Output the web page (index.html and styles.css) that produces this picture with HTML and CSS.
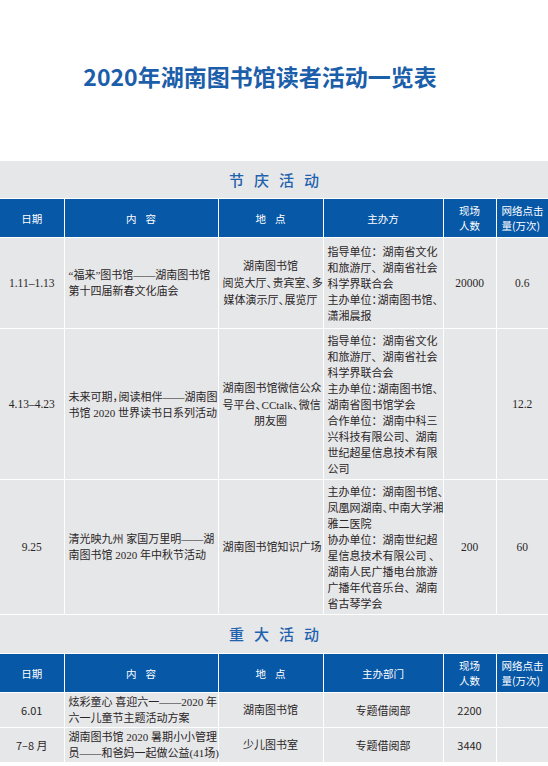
FILE: index.html
```html
<!DOCTYPE html>
<html lang="zh-CN">
<head>
<meta charset="utf-8">
<title>2020年湖南图书馆读者活动一览表</title>
<link rel="stylesheet" href="styles.css">
</head>
<body>
<div class="page">
  <header class="masthead">
    <h1 class="title">2020年湖南图书馆读者活动一览表</h1>
  </header>

  <table class="grid">
    <colgroup>
      <col class="c-date"><col class="c-content"><col class="c-place"><col class="c-org"><col class="c-num"><col class="c-net">
    </colgroup>
    <tr class="sec"><td colspan="6">节庆活动</td></tr>
    <tr class="head">
      <th>日期</th><th><span class="sp">内容</span></th><th><span class="sp">地点</span></th><th>主办方</th><th>现场<br>人数</th><th class="net">网络点击<br>量(万次)</th>
    </tr>
    <tr class="r1">
      <td class="num">1.11–1.13</td>
      <td class="content">“福来”图书馆——湖南图书馆<br>第十四届新春文化庙会</td>
      <td class="place">湖南图书馆<br>阅览大厅<span class="h">、</span>贵宾室<span class="h">、</span>多<br>媒体演示厅<span class="h">、</span>展览厅</td>
      <td class="org">指导单位：湖南省文化<br>和旅游厅、湖南省社会<br>科学界联合会<br>主办单位<span class="h">：</span>湖南图书馆<span class="h">、</span><br>潇湘晨报</td>
      <td class="num">20000</td>
      <td class="num">0.6</td>
    </tr>
    <tr>
      <td class="num">4.13–4.23</td>
      <td class="content">未来可期<span class="h">，</span>阅读相伴——湖南图<br>书馆 2020 世界读书日系列活动</td>
      <td class="place">湖南图书馆微信公众<br>号平台<span class="h">、</span>CCtalk<span class="h">、</span>微信<br>朋友圈</td>
      <td class="org">指导单位：湖南省文化<br>和旅游厅、湖南省社会<br>科学界联合会<br>主办单位<span class="h">：</span>湖南图书馆<span class="h">、</span><br>湖南省图书馆学会<br>合作单位：湖南中科三<br>兴科技有限公司、湖南<br>世纪超星信息技术有限<br>公司</td>
      <td class="num"></td>
      <td class="num">12.2</td>
    </tr>
    <tr>
      <td class="num">9.25</td>
      <td class="content">清光映九州 家国万里明——湖<br>南图书馆 2020 年中秋节活动</td>
      <td class="place">湖南图书馆知识广场</td>
      <td class="org">主办单位：湖南图书馆、<br>凤凰网湖南<span class="h">、</span>中南大学湘<br>雅二医院<br>协办单位：湖南世纪超<br>星信息技术有限公司 、<br>湖南人民广播电台旅游<br>广播年代音乐台、湖南<br>省古琴学会</td>
      <td class="num">200</td>
      <td class="num">60</td>
    </tr>
  </table>

  <table class="grid second">
    <colgroup>
      <col class="c-date"><col class="c-content"><col class="c-place"><col class="c-org"><col class="c-num"><col class="c-net">
    </colgroup>
    <tr class="sec"><td colspan="6">重大活动</td></tr>
    <tr class="head">
      <th>日期</th><th><span class="sp">内容</span></th><th><span class="sp">地点</span></th><th>主办部门</th><th>现场<br>人数</th><th class="net">网络点击<br>量(万次)</th>
    </tr>
    <tr>
      <td class="num sans">6.01</td>
      <td class="content">炫彩童心 喜迎六一——2020 年<br>六一儿童节主题活动方案</td>
      <td class="place">湖南图书馆</td>
      <td class="dept">专题借阅部</td>
      <td class="num sans">2200</td>
      <td class="num"></td>
    </tr>
    <tr>
      <td class="num sans">7–8 月</td>
      <td class="content">湖南图书馆 2020 暑期小小管理<br>员——和爸妈一起做公益(41场)</td>
      <td class="place">少儿图书室</td>
      <td class="dept">专题借阅部</td>
      <td class="num sans">3440</td>
      <td class="num"></td>
    </tr>
  </table>
</div>
</body>
</html>
```

FILE: styles.css
```css
html, body {
  margin: 0;
  padding: 0;
  background: #ffffff;
}

.page {
  width: 548px;
}

.masthead {
  height: 161px;
  padding-right: 28px;
  box-sizing: border-box;
  display: flex;
  justify-content: center;
  align-items: flex-start;
}

.title {
  margin: 60px 0 0;
  font-family: "Noto Sans CJK SC", "Liberation Sans", sans-serif;
  font-weight: 700;
  font-size: 23px;
  line-height: 32px;
  color: #1b5ea9;
  letter-spacing: 0;
}

.grid {
  width: 548px;
  table-layout: fixed;
  border-collapse: collapse;
  font-family: "Liberation Serif", "Noto Sans CJK SC", serif;
  font-size: 11px;
  line-height: 16px;
  color: #2a2526;
}

.c-date { width: 64px; }
.c-content { width: 154px; }
.c-place { width: 105px; }
.c-org { width: 120px; }
.c-num { width: 53px; }
.c-net { width: 52px; }

.grid td, .grid th {
  border: 1px solid #ffffff;
  background: #e6e7e9;
  padding: 3px 4px;
  vertical-align: middle;
  white-space: nowrap;
  overflow: visible;
}

.grid tr:first-child td { border-top: 0; }
.grid td:first-child, .grid th:first-child { border-left: 0; }
.grid td:last-child, .grid th:last-child { border-right: 0; }

.sec td {
  height: 37px;
  padding: 0;
  text-align: center;
  font-family: "Noto Sans CJK SC", sans-serif;
  font-size: 15px;
  font-weight: 500;
  color: #1f62ad;
  letter-spacing: 10px;
  text-indent: 10px;
}

.head th {
  height: 38px;
  padding: 0 2px;
  background: #0758a7;
  color: #ffffff;
  font-family: "Noto Sans CJK SC", sans-serif;
  font-weight: 400;
  font-size: 10.5px;
  line-height: 15px;
  text-align: center;
}

.head th.net {
  text-align: left;
  padding-left: 5px;
}

.sp {
  letter-spacing: 9px;
  margin-right: -9px;
}

.num {
  text-align: center;
  font-size: 11.5px;
}

.sans {
  font-family: "Noto Sans CJK SC", sans-serif;
  font-size: 11px;
}

.content {
  text-align: left;
  padding-left: 4px;
}

.place {
  text-align: center;
  padding: 3px 1px;
}

.org {
  text-align: left;
  padding-left: 3px;
  font-family: "Noto Sans CJK SC", sans-serif;
}

.dept {
  text-align: center;
  font-family: "Noto Sans CJK SC", sans-serif;
}

.h {
  font-family: "Noto Sans CJK SC", sans-serif;
  letter-spacing: -0.45em;
}

.r1 td {
  height: 84px;
}

.second td {
  padding-top: 1px;
  padding-bottom: 1px;
}

.second .sec td {
  height: 38px;
  padding: 0;
}
```
